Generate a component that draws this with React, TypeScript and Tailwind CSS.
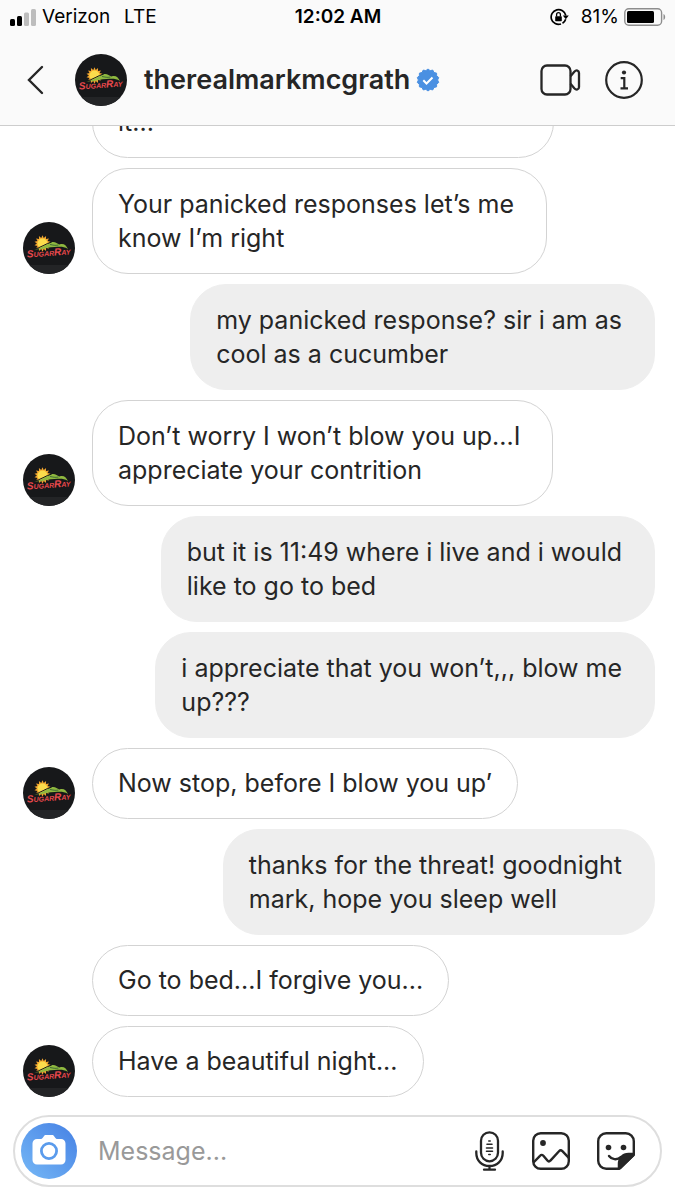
import { useState } from "react"

type Message = {
  text: string
  mine?: boolean
  avatar?: boolean
  className?: string
}

const messages: Message[] = [
  { text: "it...", className: "min-w-[462px]" },
  { text: "Your panicked responses let’s me\nknow I’m right", avatar: true },
  { text: "my panicked response? sir i am as\ncool as a cucumber", mine: true },
  { text: "Don’t worry I won’t blow you up...I\nappreciate your contrition", avatar: true },
  { text: "but it is 11:49 where i live and i would\nlike to go to bed", mine: true },
  { text: "i appreciate that you won’t,,, blow me\nup???", mine: true },
  { text: "Now stop, before I blow you up’", avatar: true },
  { text: "thanks for the threat! goodnight\nmark, hope you sleep well", mine: true },
  { text: "Go to bed...I forgive you..." },
  { text: "Have a beautiful night...", avatar: true },
]

// star outline used for the sun and the verified badge
const burst = (cx: number, cy: number, outer: number, inner: number, count: number) =>
  Array.from({ length: count * 2 }, (_, i) => {
    const r = i % 2 ? inner : outer
    const a = (Math.PI * i) / count - Math.PI / 2
    return `${(cx + r * Math.cos(a)).toFixed(2)},${(cy + r * Math.sin(a)).toFixed(2)}`
  }).join(" ")

const Avatar = () => (
  <svg viewBox="0 0 52 52" className="size-[52px] shrink-0" role="img" aria-label="therealmarkmcgrath">
    <circle cx="26" cy="26" r="26" fill="#17181a" />
    <path d="M6.500 43h39a26 26 0 0 1-39 0z" fill="#232426" />
    <polygon points={burst(19.5, 21.5, 8.2, 5.6, 14)} fill="#f2a52e" />
    <circle cx="19.500" cy="21.500" r="5" fill="#fbdc4c" />
    <path d="M11 27.500c7-.5 13-6.500 18.500-7.500 3-.3 4.500 1.500 7 2.500 4-1.500 6.500.5 8.500 4.500-5-3-8.500-2-13.500-2-5.500 0-9 1.500-12.500 2z" fill="#8fb83f" />
    <path d="M10.500 27.200c7-1 12.500-6 18-7" stroke="#17181a" strokeWidth="1" fill="none" />
    <path d="M27 22.500c3 .5 5 1.300 8.500.5" stroke="#3f6b35" strokeWidth="1" fill="none" />
    <text
      x="4"
      y="35.500"
      transform="rotate(-4 4 35)"
      fill="#e8484c"
      fontFamily="Liberation Sans, sans-serif"
      fontWeight="700"
      fontStyle="italic"
      fontSize="7"
    >
      <tspan fontSize="10">S</tspan>UGAR<tspan fontSize="10">R</tspan>AY
    </text>
  </svg>
)

const StatusBar = () => (
  <div className="grid grid-cols-3 items-center h-[34px] pl-[10px] pr-[9px] text-[19px] text-black">
    <div className="flex items-center">
      <svg viewBox="0 0 26 17" className="w-[26px] h-[17px] mr-[6px]">
        <rect x="0" y="10" width="5" height="7" rx="1.500" />
        <rect x="7" y="7" width="5" height="10" rx="1.500" />
        <rect x="14" y="3.500" width="5" height="13.500" rx="1.500" fill="#bdbdbd" />
        <rect x="21" y="0" width="5" height="17" rx="1.500" fill="#bdbdbd" />
      </svg>
      <span className="mr-[14px]">Verizon</span>
      <span>LTE</span>
    </div>
    <div className="text-center font-semibold">12:02 AM</div>
    <div className="flex items-center justify-end">
      <svg viewBox="0 0 19 18" className="w-[19px] h-[18px] mr-3" fill="none" stroke="#000" strokeWidth="1.700">
        <path d="M15.800 7.500A7.400 7.400 0 1 0 11 16" />
        <path d="M12.500 15.200a7.400 7.400 0 0 0 3.200-4" />
        <path d="M12.800 7.500h6l-3 3.700z" fill="#000" stroke="none" />
        <rect x="5.200" y="8.300" width="6.600" height="4.900" rx=".6" fill="#000" stroke="none" />
        <path d="M6.600 8.500V6.500a1.900 1.900 0 0 1 3.800 0v2" strokeWidth="1.300" />
      </svg>
      <span className="mr-[5px]">81%</span>
      <svg viewBox="0 0 42 18" className="w-[42px] h-[18px]">
        <rect x=".8" y=".8" width="36.800" height="16.400" rx="4" fill="none" stroke="#8d8d8d" strokeWidth="1.400" />
        <rect x="3" y="3" width="27" height="12" rx="1.500" />
        <path d="M39.500 6c2.200.8 2.200 5.200 0 6z" fill="#8d8d8d" />
      </svg>
    </div>
  </div>
)

const Header = () => (
  <header className="shrink-0 bg-[#fafafa] border-b border-[#cdcdcd]">
    <StatusBar />
    <div className="flex items-center h-[91px] pl-[26px] pr-8">
      <button aria-label="Back">
        <svg viewBox="0 0 18 30" className="w-[18px] h-[30px]" fill="none" stroke="#262626" strokeWidth="2.400" strokeLinecap="round">
          <path d="M16 2 3 15l13 13" />
        </svg>
      </button>
      <div className="ml-[31px] mr-[17px]">
        <Avatar />
      </div>
      <h1 className="pt-[2px] text-[27px] font-semibold">therealmarkmcgrath</h1>
      <svg viewBox="0 0 24 24" className="size-6 ml-[6px]" role="img" aria-label="Verified">
        <polygon points={burst(12, 12, 11, 9.6, 14)} fill="#4a90e2" stroke="#4a90e2" strokeLinejoin="round" />
        <path d="m7.300 12.300 3.200 3.200 6-6" fill="none" stroke="#fff" strokeWidth="2" />
      </svg>
      <div className="flex items-center gap-6 ml-auto">
        <button aria-label="Video call">
          <svg viewBox="0 0 41 32" className="w-[41px] h-8" fill="none" stroke="#262626" strokeWidth="2.300" strokeLinejoin="round">
            <rect x="1.500" y="1.500" width="29" height="29" rx="5.500" />
            <path d="M30.500 12.200 34.300 7.800c2-2.200 4.700-1.600 4.700 1.200v14c0 2.800-2.700 3.400-4.700 1.200l-3.800-4.400" />
          </svg>
        </button>
        <button aria-label="Details">
          <svg viewBox="0 0 38 38" className="size-[38px]" fill="none" stroke="#262626" strokeWidth="2.200">
            <circle cx="19" cy="19" r="17.800" />
            <circle cx="19" cy="11.500" r="2.100" fill="#262626" stroke="none" />
            <path d="M15.700 17.200h3.600v10.100M15.500 27.300h7.500" strokeWidth="2.200" />
          </svg>
        </button>
      </div>
    </div>
  </header>
)

const Bubble = ({ text, mine, avatar, className = "" }: Message) => {
  const multiline = text.includes("\n")

  return (
    <li className={`flex items-end ${mine ? "justify-end" : ""}`}>
      {!mine && <div className="w-[69px] shrink-0">{avatar && <Avatar />}</div>}
      <p
        className={`whitespace-pre-line rounded-[36px] border pl-[25px] text-[25px] ${
          multiline ? "pr-8 py-[18px] leading-[34px]" : "pr-[25px] py-[17px] leading-[35px]"
        } ${mine ? "bg-[#eeeeee] border-[#eeeeee]" : "bg-white border-[#d3d3d3]"} ${className}`}
      >
        {text}
      </p>
    </li>
  )
}

const Composer = () => {
  const [draft, setDraft] = useState("")

  return (
    <form
      className="shrink-0 flex items-center h-[72px] mx-[13px] mt-[18px] mb-[13px] pl-[6px] pr-[25px] rounded-full border-2 border-[#dedede]"
      onSubmit={(e) => e.preventDefault()}
    >
      <button type="button" aria-label="Camera" className="shrink-0">
        <svg viewBox="0 0 56 56" className="size-14">
          <defs>
            <linearGradient id="camera" x1="0" y1="1" x2="1" y2="0">
              <stop offset="0" stopColor="#76b8f6" />
              <stop offset="1" stopColor="#4580e4" />
            </linearGradient>
          </defs>
          <circle cx="28" cy="28" r="28" fill="url(#camera)" />
          <path d="M16 16h3.500c1 0 1.700-.4 2.300-1.300l.9-1.300c.6-.9 1.400-1.400 2.500-1.400h5.600c1.100 0 1.900.5 2.500 1.400l.9 1.300c.6.900 1.300 1.300 2.300 1.300H40a4.500 4.500 0 0 1 4.500 4.500V37a4.500 4.500 0 0 1-4.500 4.500H16a4.500 4.500 0 0 1-4.500-4.500V20.500A4.500 4.500 0 0 1 16 16z" fill="#fff" />
          <circle cx="28" cy="28" r="7.600" fill="none" stroke="#5a9bec" strokeWidth="2.800" />
        </svg>
      </button>
      <input
        aria-label="Message"
        placeholder="Message..."
        value={draft}
        onChange={(e) => setDraft(e.target.value)}
        className="flex-1 min-w-0 ml-[21px] pt-[2px] text-[25px] outline-none placeholder:text-[#999999]"
      />
      <div className="flex items-center gap-[27px]">
        <button type="button" aria-label="Voice message">
          <svg viewBox="0 0 30 40" className="w-[30px] h-10" fill="none" stroke="#262626" strokeWidth="2.300" strokeLinecap="round">
            <rect x="6" y="1.300" width="17" height="29" rx="8.500" />
            <path d="M1.300 20.500V22c0 7.500 5.500 13 13.200 13s13.200-5.500 13.200-13v-1.500M14.500 35v3.500M9 38.700h11" />
            <path d="M13.800 10h1.400M12 13.300h5M11.500 17h6M11.500 20.300h6M13.800 23.500h1.400" strokeWidth="1.600" />
          </svg>
        </button>
        <button type="button" aria-label="Photo">
          <svg viewBox="0 0 38 38" className="size-[38px]" fill="none" stroke="#262626" strokeWidth="2.400" strokeLinejoin="round">
            <rect x="1.200" y="1.200" width="35.600" height="35.600" rx="7.500" />
            <circle cx="11" cy="11" r="2.900" fill="#262626" stroke="none" />
            <path d="M1.500 30.500 8 23.800c1.200-1.300 2.200-1.300 3.400 0l4 4.800c1 1.200 2 1.200 3 0l8.600-9.400c1.200-1.300 2.200-1.300 3.400 0l6.400 6.600" />
          </svg>
        </button>
        <button type="button" aria-label="Sticker">
          <svg viewBox="0 0 38 38" className="size-[38px]" fill="none" stroke="#262626" strokeWidth="2.400" strokeLinejoin="round" strokeLinecap="round">
            <path d="M22 36.800H9.200a8 8 0 0 1-8-8V9.200a8 8 0 0 1 8-8h19.600a8 8 0 0 1 8 8v13.600z" />
            <circle cx="11.500" cy="15.500" r="2.800" fill="#262626" stroke="none" />
            <circle cx="26.500" cy="15.500" r="2.800" fill="#262626" stroke="none" />
            <path d="M12 24c2.500 3.500 8 4.500 12 1" />
            <path d="M21.500 36.500V32c0-6 4-10.500 10-10.500h5.200v2L23.500 36.500z" fill="#262626" strokeWidth="1.500" />
          </svg>
        </button>
      </div>
    </form>
  )
}

const App = () => {
  return (
    <div className="flex flex-col h-screen bg-white text-[#262626] font-[Inter,'Liberation_Sans',sans-serif]">
      <Header />
      <main className="flex-1 min-h-0 flex flex-col justify-end overflow-hidden">
        <ul className="flex flex-col gap-[10px] pl-[23px] pr-5">
          {messages.map((message, index) => (
            <Bubble key={index} {...message} />
          ))}
        </ul>
      </main>
      <Composer />
    </div>
  )
}

export default App
